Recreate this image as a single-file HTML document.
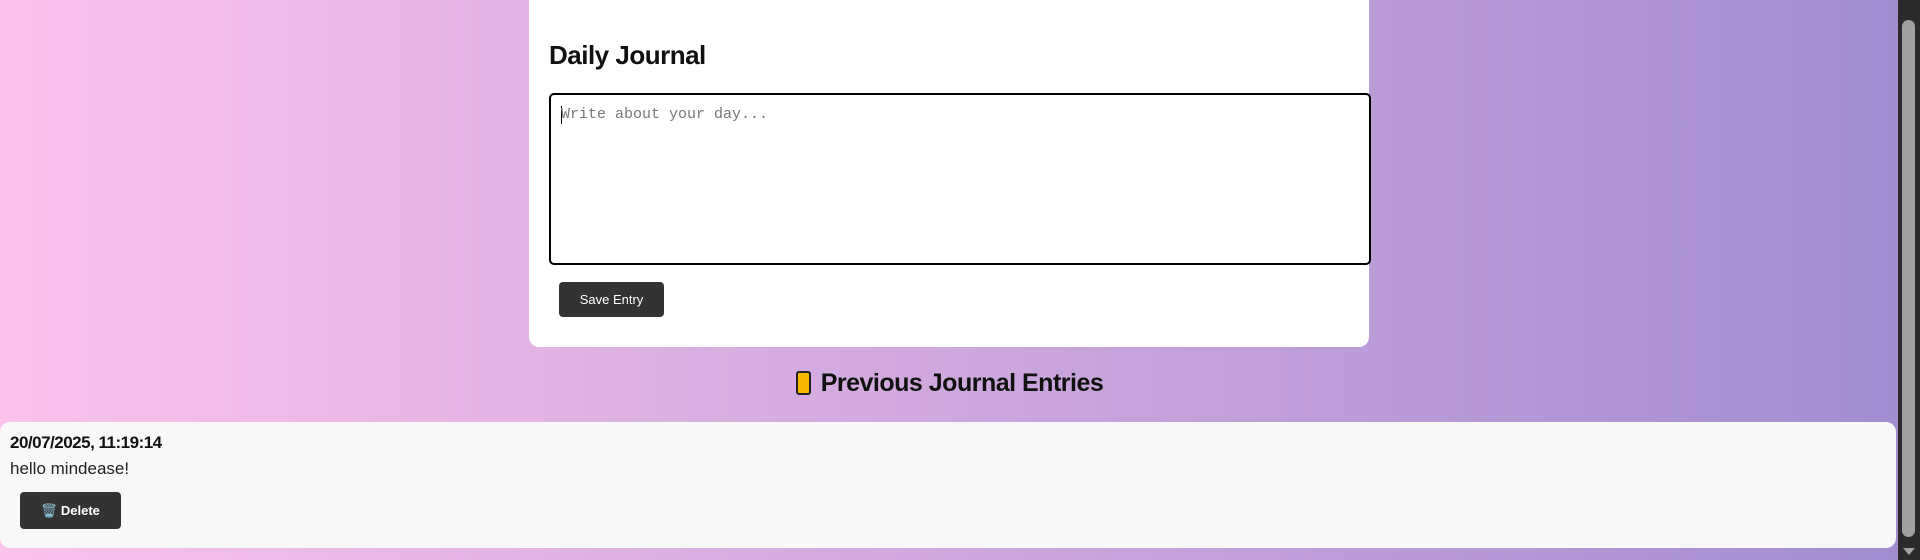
<!DOCTYPE html>
<html><head><style>
html,body{margin:0;padding:0;width:1920px;height:560px;overflow:hidden}
body{background:linear-gradient(to right,#fbc2eb,#a18cd1);font-family:"Liberation Sans",sans-serif;position:relative}
.card{position:absolute;left:529px;top:-12px;width:840px;height:359px;background:#fff;border-radius:10px}
h2{position:absolute;margin:0;left:549px;top:40px;font-size:26px;font-weight:600;color:#111;letter-spacing:-0.5px}
.ta{position:absolute;left:549px;top:93px;width:818px;height:168px;border:2px solid #000;border-radius:5px;background:#fff}
.ta span{position:absolute;left:10px;top:11px;font-family:"Liberation Mono",monospace;font-size:15px;color:#777}
.ta i{position:absolute;left:10px;top:11px;width:1px;height:18px;background:#000}
.btn{position:absolute;background:#333;color:#fff;border-radius:4px;font-weight:bold;font-size:13px;display:flex;align-items:center;justify-content:center}
h3{position:absolute;margin:0;left:0;width:1899px;top:369px;text-align:center;font-size:25px;font-weight:600;color:#111;letter-spacing:-0.5px}
.ledger{display:inline-block;width:15px;height:24px;background:#f9b800;border:2px solid #222;border-radius:3px;vertical-align:-4px;margin-right:10px;box-sizing:border-box}
.entry{position:absolute;left:0;top:422px;width:1896px;height:126px;background:#f8f8f8;border-radius:10px}
.date{position:absolute;left:10px;top:433px;font-size:17px;font-weight:bold;color:#111;letter-spacing:-0.5px}
.txt{position:absolute;left:10px;top:459px;font-size:17px;color:#222}
.sb{position:absolute;left:1898px;top:0;width:22px;height:560px;background:#2b2b2b}
.th{position:absolute;left:1902px;top:20px;width:13px;height:517px;background:#a0a0a0;border-radius:7px}
.ar{position:absolute;left:1903px;top:548px;width:0;height:0;border-left:6px solid transparent;border-right:6px solid transparent;border-top:7px solid #a0a0a0}
</style></head><body>
<div class="card"></div>
<h2>Daily Journal</h2>
<div class="ta"><i></i><span>Write about your day...</span></div>
<div class="btn" style="left:559px;top:282px;width:105px;height:35px;font-weight:normal">Save Entry</div>
<h3><span class="ledger"></span>Previous Journal Entries</h3>
<div class="entry"></div>
<div class="date">20/07/2025, 11:19:14</div>
<div class="txt">hello mindease!</div>
<div class="btn" style="left:20px;top:492px;width:101px;height:37px;font-size:13px">🗑️&nbsp;Delete</div>
<div class="sb"></div><div class="th"></div><div class="ar"></div>
</body></html>
